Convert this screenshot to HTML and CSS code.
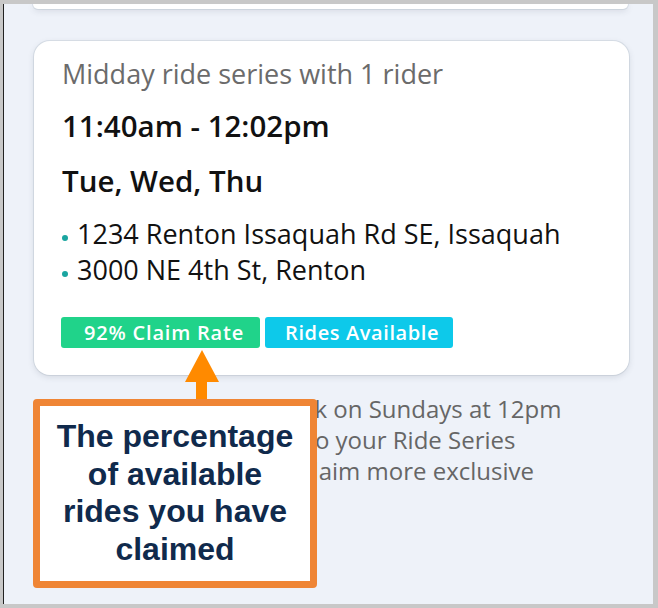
FILE: index.html
```html
<!DOCTYPE html>
<html>
<head>
<meta charset="utf-8">
<link rel="stylesheet" href="styles.css">
</head>
<body>
<div class="screen">
  <div class="card card-prev"></div>
  <div class="card card-main">
    <div class="subtitle">Midday ride series with 1 rider</div>
    <div class="time">11:40am - 12:02pm</div>
    <div class="days">Tue, Wed, Thu</div>
    <ul class="stops">
      <li>1234 Renton Issaquah Rd SE, Issaquah</li>
      <li>3000 NE 4th St, Renton</li>
    </ul>
    <div class="badges">
      <span class="badge badge-green">92% Claim Rate</span>
      <span class="badge badge-blue">Rides Available</span>
    </div>
  </div>
  <p class="note">More fresh rides unlock on Sundays at 12pm<br>Rides are then added to your Ride Series<br>so you can be first to claim more exclusive</p>

  <svg class="arrow" width="34" height="54" viewBox="0 0 34 54"><polygon points="17,0 34,32 22,32 22,54 11,54 11,32 0,32" fill="#ff8a00"/></svg>
  <div class="callout">The percentage of available rides you have claimed</div>
</div>
</body>
</html>
```
FILE: styles.css
```css
html, body {
  margin: 0;
  padding: 0;
  background: #c8c8c8;
}
.screen {
  position: relative;
  box-sizing: border-box;
  margin: 4px 5px 0 3px;
  height: 600px;
  border-left: 1px solid #222;
  background: #eef2f9;
  overflow: hidden;
  font-family: "Open Sans", "Noto Sans", sans-serif;
}
.card {
  background: #fff;
  border-radius: 16px;
  box-shadow: 0 2px 6px rgba(60, 70, 90, 0.15), 0 0 0 1px rgba(200, 210, 220, 0.5);
}
.card-prev {
  margin: 0 25px 0 29px;
  height: 5px;
  border-radius: 0 0 16px 16px;
}
.card-main {
  margin: 32px 24px 0 30px;
  padding: 18px 28px 27px 28px;
}
.subtitle {
  font-size: 27px;
  line-height: 30px;
  color: #6b6b6b;
}
.time {
  margin-top: 20px;
  font-size: 29.5px;
  line-height: 34px;
  font-weight: 600;
  color: #111;
}
.days {
  margin-top: 21px;
  font-size: 29.5px;
  line-height: 34px;
  font-weight: 600;
  color: #111;
}
.stops {
  list-style: none;
  margin: 18px 0 0 0;
  padding: 0;
}
.stops li {
  position: relative;
  padding-left: 15px;
  font-size: 27px;
  line-height: 36px;
  color: #111;
}
.stops li::before {
  content: "";
  position: absolute;
  left: 0;
  top: 19px;
  width: 6px;
  height: 6px;
  border-radius: 50%;
  background: #1aa5a0;
}
.badges {
  display: flex;
  gap: 5px;
  margin-top: 29px;
  margin-left: -1px;
}
.badge {
  display: inline-block;
  height: 31px;
  line-height: 31px;
  padding: 0 16px 0 23px;
  border-radius: 3px;
  color: #fff;
  font-family: "Open Sans", "Liberation Sans", sans-serif;
  font-weight: 600;
  font-size: 20px;
  letter-spacing: 0.8px;
}
.badge-green { background: #20d38a; }
.badge-blue {
  background: #0dc9ea;
  padding: 0 14px 0 20px;
  letter-spacing: 0.6px;
}
.note {
  margin: 18px 0 0 58px;
  font-size: 24px;
  line-height: 31px;
  color: #666;
  white-space: nowrap;
}
.arrow {
  position: absolute;
  left: 181px;
  top: 346px;
}
.callout {
  position: absolute;
  left: 29px;
  top: 395px;
  box-sizing: border-box;
  width: 284px;
  height: 189px;
  border: 7px solid #ef8535;
  border-radius: 4px;
  background: #fff;
  padding: 12px 7px 0;
  text-align: center;
  font-family: "Liberation Sans", Arial, sans-serif;
  font-weight: 700;
  font-size: 32px;
  line-height: 37.5px;
  color: #102a4c;
}
```
